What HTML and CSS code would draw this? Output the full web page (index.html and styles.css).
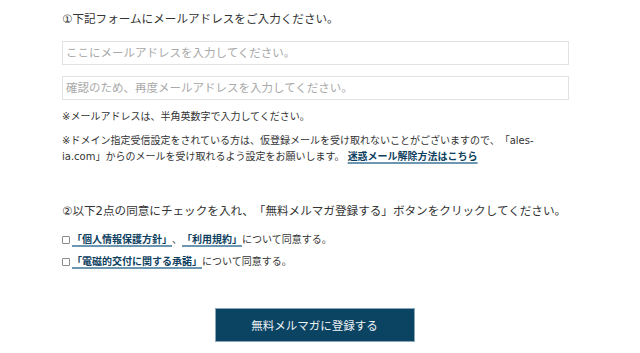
FILE: index.html
```html
<!DOCTYPE html>
<html lang="ja">
<head>
<meta charset="utf-8">
<title>メルマガ登録</title>
<link rel="stylesheet" href="styles.css">
</head>
<body>
<main class="form">
  <p class="heading">①下記フォームにメールアドレスをご入力ください。</p>
  <div class="inputs">
    <input class="field" type="email" placeholder="ここにメールアドレスを入力してください。">
    <input class="field" type="email" placeholder="確認のため、再度メールアドレスを入力してください。">
  </div>
  <p class="note note-first">※メールアドレスは、半角英数字で入力してください。</p>
  <p class="note note-second">※ドメイン指定受信設定をされている方は、仮登録メールを受け取れないことがございますので、「ales-ia.com」からのメールを受け取れるよう設定をお願いします。 <a class="link" href="#">迷惑メール解除方法はこちら</a></p>

  <p class="heading heading-second">②以下2点の同意にチェックを入れ、「無料メルマガ登録する」ボタンをクリックしてください。</p>
  <label class="agree"><input class="check" type="checkbox"><a class="link" href="#">「個人情報保護方針」</a>、<a class="link" href="#">「利用規約」</a>について同意する。</label>
  <label class="agree agree-second"><input class="check" type="checkbox"><a class="link" href="#">「電磁的交付に関する承諾」</a>について同意する。</label>

  <div class="actions">
    <button class="submit" type="button">無料メルマガに登録する</button>
  </div>
</main>
</body>
</html>
```
FILE: styles.css
```css
* { box-sizing: border-box; }
html, body { margin: 0; padding: 0; background: #fff; }
body {
  font-family: "DejaVu Sans", "Noto Sans CJK JP", sans-serif;
  color: #333;
  text-spacing-trim: space-all;
}
.form {
  width: 507px;
  margin-left: 62px;
  padding-top: 9px;
}
.heading {
  margin: 0;
  font-size: 11.6px;
  line-height: 20px;
  color: #333;
  white-space: nowrap;
}
.inputs {
  display: flex;
  flex-direction: column;
  gap: 11px;
  margin-top: 12px;
}
.field {
  display: block;
  width: 100%;
  height: 24px;
  margin: 0;
  padding: 0 3px;
  border: 1px solid #e2e2e2;
  border-radius: 0;
  font-family: "DejaVu Sans", "Noto Sans CJK JP", sans-serif;
  font-size: 11.5px;
  color: #333;
  background: #fff;
  outline: none;
  text-spacing-trim: space-all;
}
.field::placeholder { color: #a9a9a9; }
.note {
  margin: 0;
  font-size: 10px;
  line-height: 16px;
  color: #333;
}
.note-first { margin-top: 9px; }
.note-second { margin-top: 8px; }
.link {
  color: #0e3f5f;
  font-weight: bold;
  text-decoration: underline;
  text-decoration-color: #6d96b0;
  text-decoration-thickness: 2px;
  text-underline-offset: 2px;
}
.heading-second { margin-top: 36px; }
.agree {
  display: block;
  height: 16px;
  margin-top: 11px;
  font-size: 10px;
  line-height: 16px;
  color: #333;
  white-space: nowrap;
}
.agree-second { margin-top: 6px; }
.check {
  appearance: none;
  -webkit-appearance: none;
  display: inline-block;
  vertical-align: -1px;
  width: 8px;
  height: 8px;
  margin: 0 2px 0 0;
  border: 1px solid #8a8a8a;
  border-radius: 1px;
  background: #fff;
}
.actions {
  display: flex;
  justify-content: center;
  margin-top: 38px;
  padding-right: 2px;
}
.submit {
  width: 200px;
  height: 34px;
  border: 1px solid #8aa7ba;
  background: #0b4463;
  color: #eef3f6;
  font-family: "DejaVu Sans", "Noto Sans CJK JP", sans-serif;
  font-size: 11.5px;
  cursor: pointer;
}
```
